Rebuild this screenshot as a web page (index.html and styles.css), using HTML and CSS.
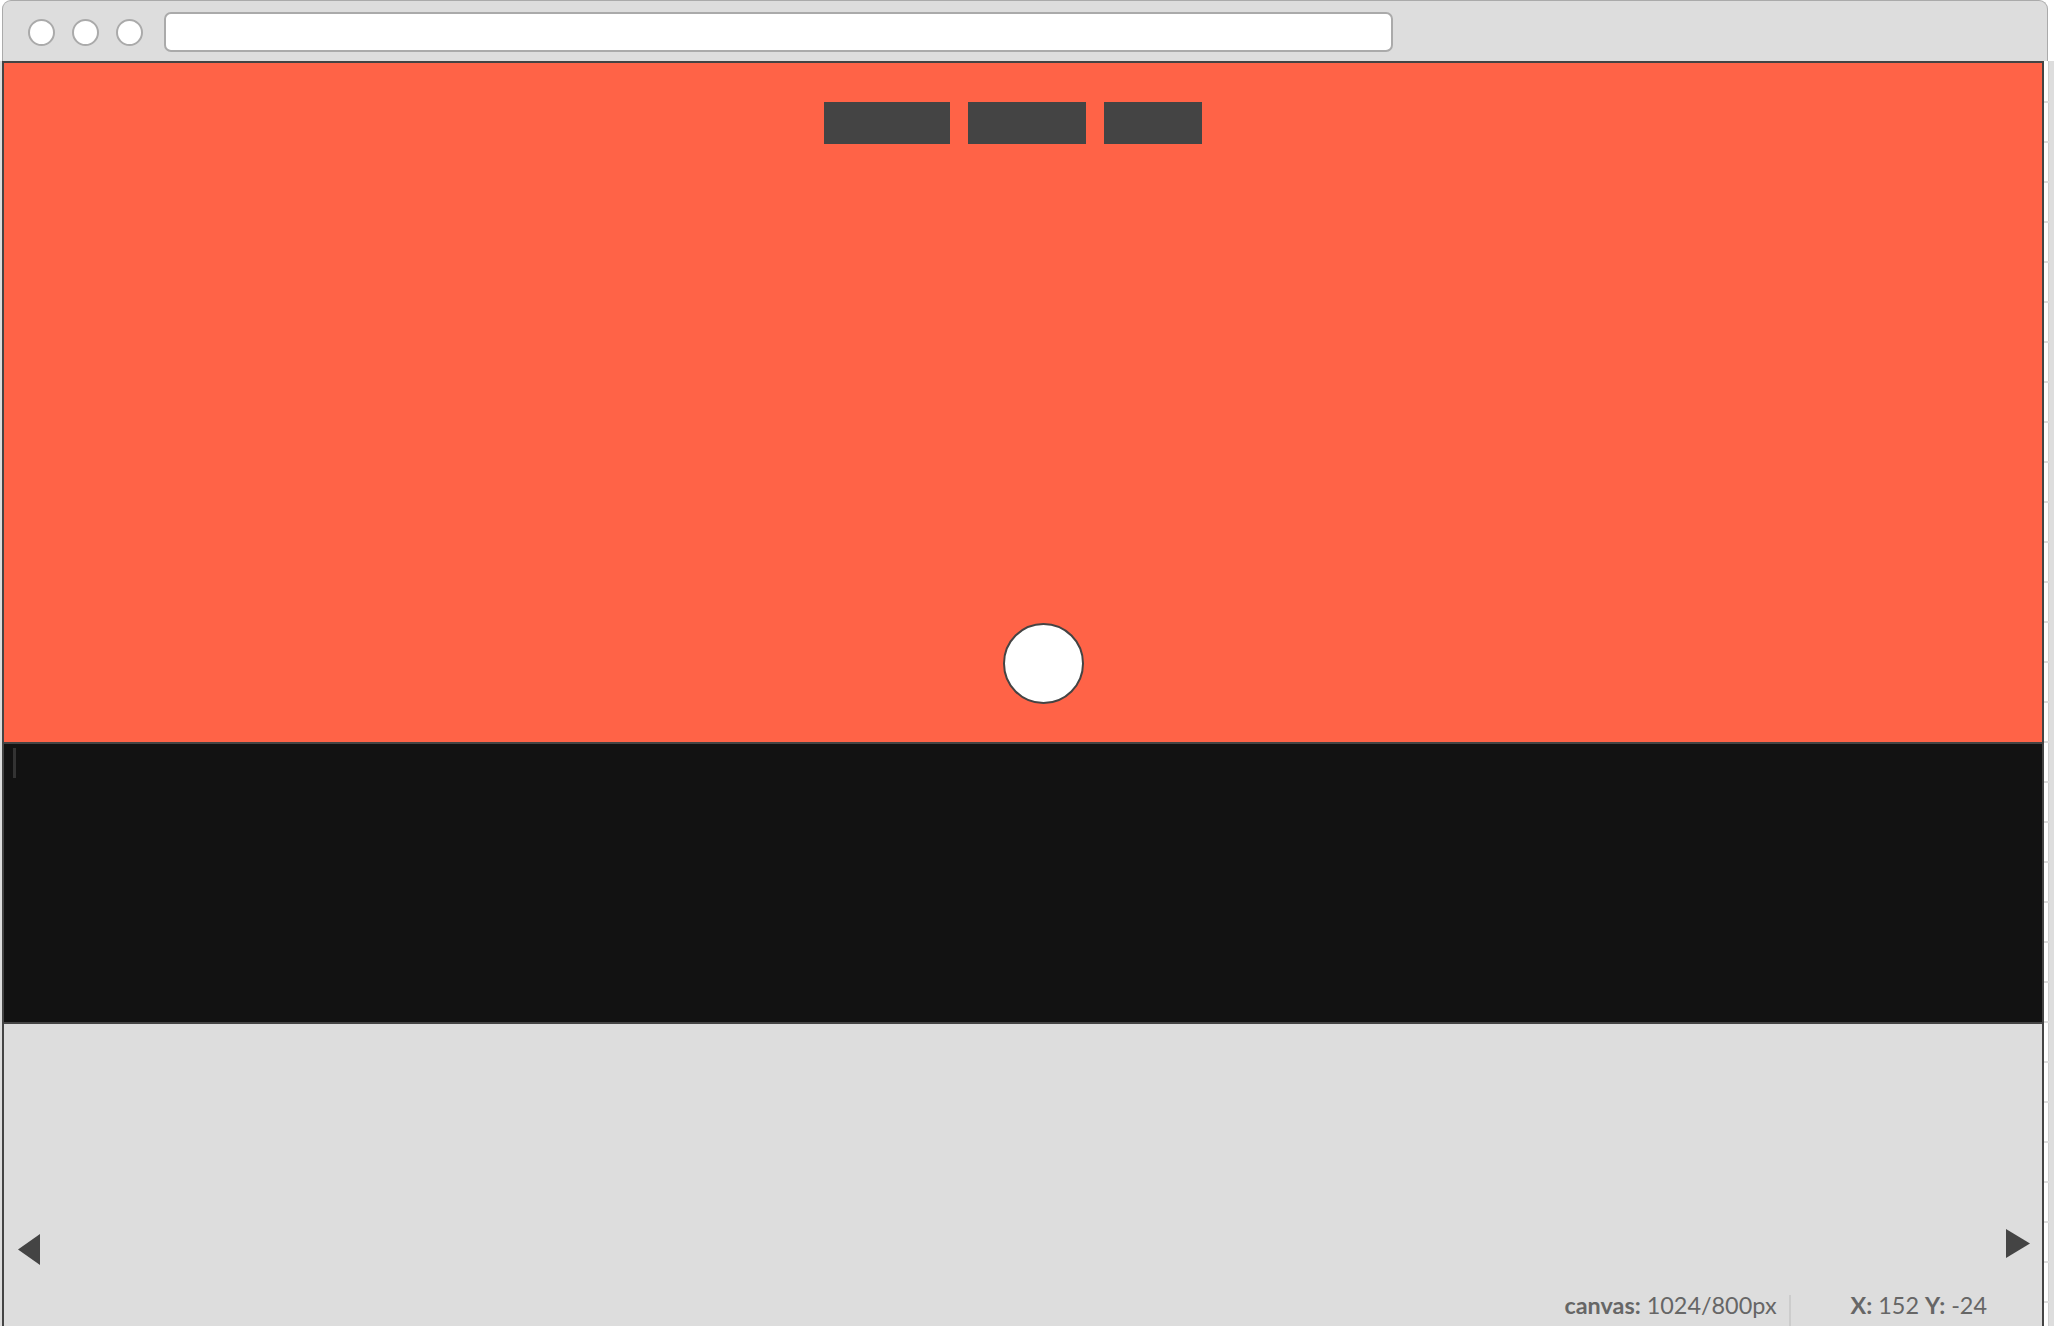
FILE: index.html
```html
<!DOCTYPE html>
<html>
<head>
<meta charset="utf-8">
<title>Canvas</title>
<link rel="stylesheet" href="styles.css">
</head>
<body>
<div class="app">
  <div class="chrome">
    <span class="dot"></span>
    <span class="dot"></span>
    <span class="dot"></span>
    <div class="url"></div>
  </div>
  <div class="main">
    <div class="frame">
      <div class="stage">
        <div class="buttons">
          <span class="btn btn-a"></span>
          <span class="btn btn-b"></span>
          <span class="btn btn-c"></span>
        </div>
        <div class="ball"></div>
      </div>
      <div class="console"><span class="caret"></span></div>
      <div class="bottom">
        <div class="arrows">
          <svg class="arrow-left" width="22" height="31" viewBox="0 0 22 31"><polygon points="22,0 22,31 0,15.5" fill="#444"/></svg>
          <svg class="arrow-right" width="24" height="29" viewBox="0 0 24 29"><polygon points="0,0 0,29 24,14.5" fill="#444"/></svg>
        </div>
        <div class="status">
          <span class="stat"><b>canvas:</b> 1024/800px</span>
          <span class="sep"></span>
          <span class="stat coords"><b>X:</b> 152 <b>Y:</b> -24</span>
        </div>
      </div>
    </div>
    <div class="ruler"></div>
  </div>
</div>
</body>
</html>
```
FILE: styles.css
```css
html, body {
  margin: 0;
  padding: 0;
  background: #ffffff;
  overflow: hidden;
}
.app {
  width: 2054px;
  height: 1326px;
  display: flex;
  flex-direction: column;
  font-family: Lato, "Liberation Sans", sans-serif;
}
.chrome {
  box-sizing: border-box;
  margin-left: 2px;
  width: 2046px;
  height: 61px;
  border: 1px solid #aaaaaa;
  border-bottom: none;
  border-radius: 9px 9px 0 0;
  background: #dddddd;
  display: flex;
  align-items: center;
  padding-left: 25px;
  padding-top: 2px;
}
.dot {
  box-sizing: border-box;
  width: 27px;
  height: 27px;
  border: 2px solid #aaaaaa;
  border-radius: 50%;
  background: #ffffff;
  margin-right: 17px;
}
.url {
  box-sizing: border-box;
  margin-left: 4px;
  width: 1229px;
  height: 40px;
  border: 2px solid #aaaaaa;
  border-radius: 7px;
  background: #ffffff;
}
.main {
  display: flex;
  flex: 1;
  background: #dddddd;
}
.frame {
  box-sizing: border-box;
  margin-left: 2px;
  width: 2042px;
  border: 2px solid #444444;
  border-bottom: none;
  display: flex;
  flex-direction: column;
}
.stage {
  position: relative;
  height: 679px;
  background: #ff6347;
  border-bottom: 2px solid #444444;
}
.buttons {
  display: flex;
  justify-content: center;
  gap: 18px;
  padding-top: 39px;
  padding-right: 20px;
}
.btn {
  display: block;
  height: 42px;
  background: #444444;
}
.btn-a { width: 126px; }
.btn-b { width: 118px; }
.btn-c { width: 98px; }
.ball {
  position: absolute;
  left: 999px;
  top: 560px;
  box-sizing: border-box;
  width: 81px;
  height: 81px;
  border: 2px solid #444444;
  border-radius: 50%;
  background: #ffffff;
}
.console {
  height: 274px;
  background: #121212;
  border-bottom: 2px solid #444444;
  padding: 4px 0 0 9px;
}
.caret {
  display: block;
  width: 3px;
  height: 30px;
  background: #333333;
}
.bottom {
  flex: 1;
  background: #dddddd;
  display: flex;
  flex-direction: column;
  padding-top: 205px;
}
.arrows {
  height: 36px;
  display: flex;
  justify-content: space-between;
  align-items: flex-start;
  padding: 0 12px 0 14px;
}
.arrow-left { margin-top: 5px; }
.status {
  flex: 1;
  display: flex;
  justify-content: flex-end;
  align-items: flex-end;
  padding-right: 55px;
  color: #666666;
  font-size: 23.4px;
  line-height: 31px;
}
.stat {
  margin-bottom: 5px;
}
.stat b {
  font-weight: 700;
}
.sep {
  width: 2px;
  height: 31px;
  background: #cccccc;
  margin: 0 60px 0 12px;
}
.ruler {
  flex: 1;
  background:
    repeating-linear-gradient(to bottom, transparent 0, transparent 38px, #dddddd 38px, #dddddd 40px) 0 2px / 8px 100% no-repeat,
    linear-gradient(to right, #ffffff 0, #ffffff 4px, #cccccc 4px, #cccccc 5px, #dddddd 5px);
}
```
